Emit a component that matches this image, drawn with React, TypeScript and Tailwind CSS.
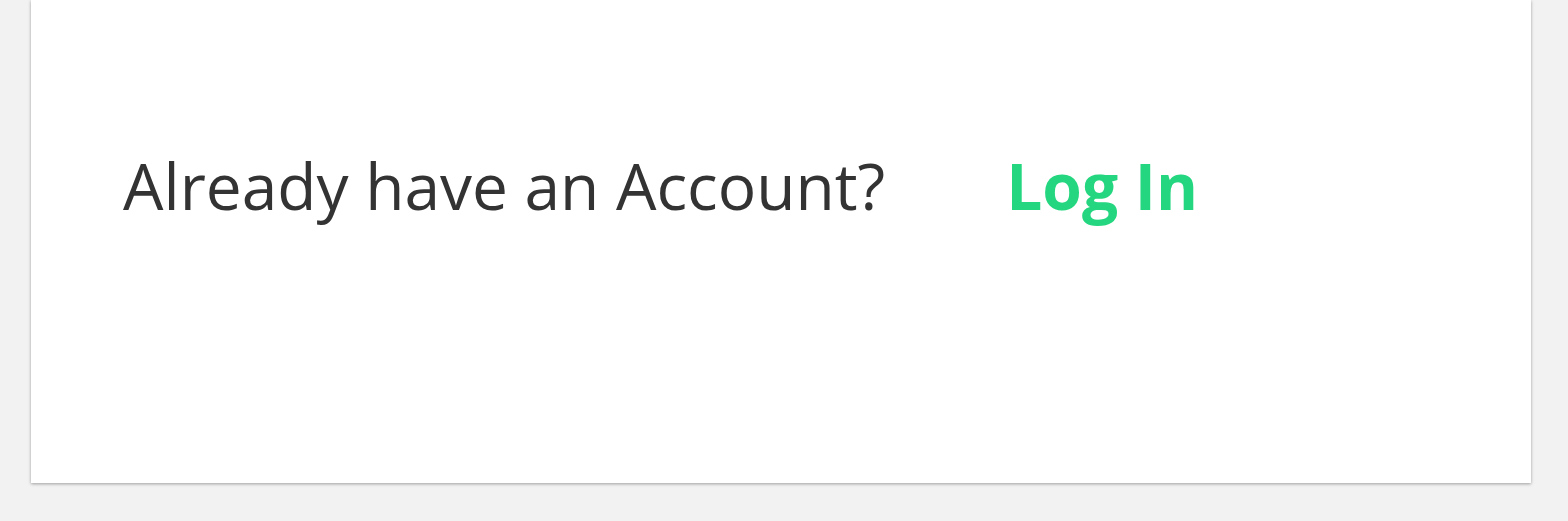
export default function App() {
  return (
    <div className="min-h-[521px] w-full bg-[#f2f2f2] px-[31px] pb-[38px] font-['Open_Sans',sans-serif]">
      <div className="flex h-[483px] w-[1500px] items-start bg-white pt-[146px] pl-[92px] shadow-[0_1px_3px_rgba(0,0,0,0.35)]">
        <span className="text-[64px] leading-[80px] text-[#333333]">Already have an Account?</span>
        <a href="#" className="ml-[121px] text-[64px] font-bold leading-[80px] text-[#24d67f]">
          Log In
        </a>
      </div>
    </div>
  );
}
